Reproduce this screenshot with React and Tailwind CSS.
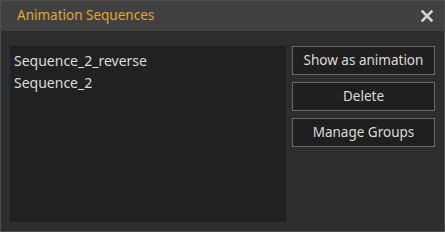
import React from "react";

const items = ["Sequence_2_reverse", "Sequence_2"];
const actions = ["Show as animation", "Delete", "Manage Groups"];

const CloseIcon = () => (
  <svg width="12" height="12" viewBox="0 0 12 12">
    <path d="M1.5 1.5 L10.5 10.5 M10.5 1.5 L1.5 10.5" stroke="#d4d4d4" strokeWidth="2.6" strokeLinecap="square" />
  </svg>
);

export default function App() {
  return (
    <div
      className="w-[445px] h-[232px] flex flex-col border border-[#4d4d4d] bg-[#2d2d2d] text-[13px]"
      style={{ fontFamily: '"Noto Sans", "Open Sans", sans-serif' }}
    >
      <div className="h-[30px] shrink-0 flex items-center justify-between bg-[#414141] pl-[16px] pr-[11px]">
        <span className="text-[#e0a53a] text-[13.5px] leading-none">Animation Sequences</span>
        <CloseIcon />
      </div>
      <div className="flex flex-1 gap-[6px] pl-[9px] pr-[9px] pt-[15px] pb-[9px]">
        <div className="w-[276px] bg-[#212121] pt-[4px] pl-[4px] flex flex-col">
          {items.map((it) => (
            <div key={it} className="h-[22px] leading-[22px] text-[14px] text-[#dcdcdc]">
              {it}
            </div>
          ))}
        </div>
        <div className="flex flex-col gap-[7px] w-[143px]">
          {actions.map((a) => (
            <button
              key={a}
              className="h-[29px] border border-[#6a6a6a] bg-[#1f1f1f] text-[#dcdcdc] text-[13.5px] leading-none"
            >
              {a}
            </button>
          ))}
        </div>
      </div>
    </div>
  );
}
